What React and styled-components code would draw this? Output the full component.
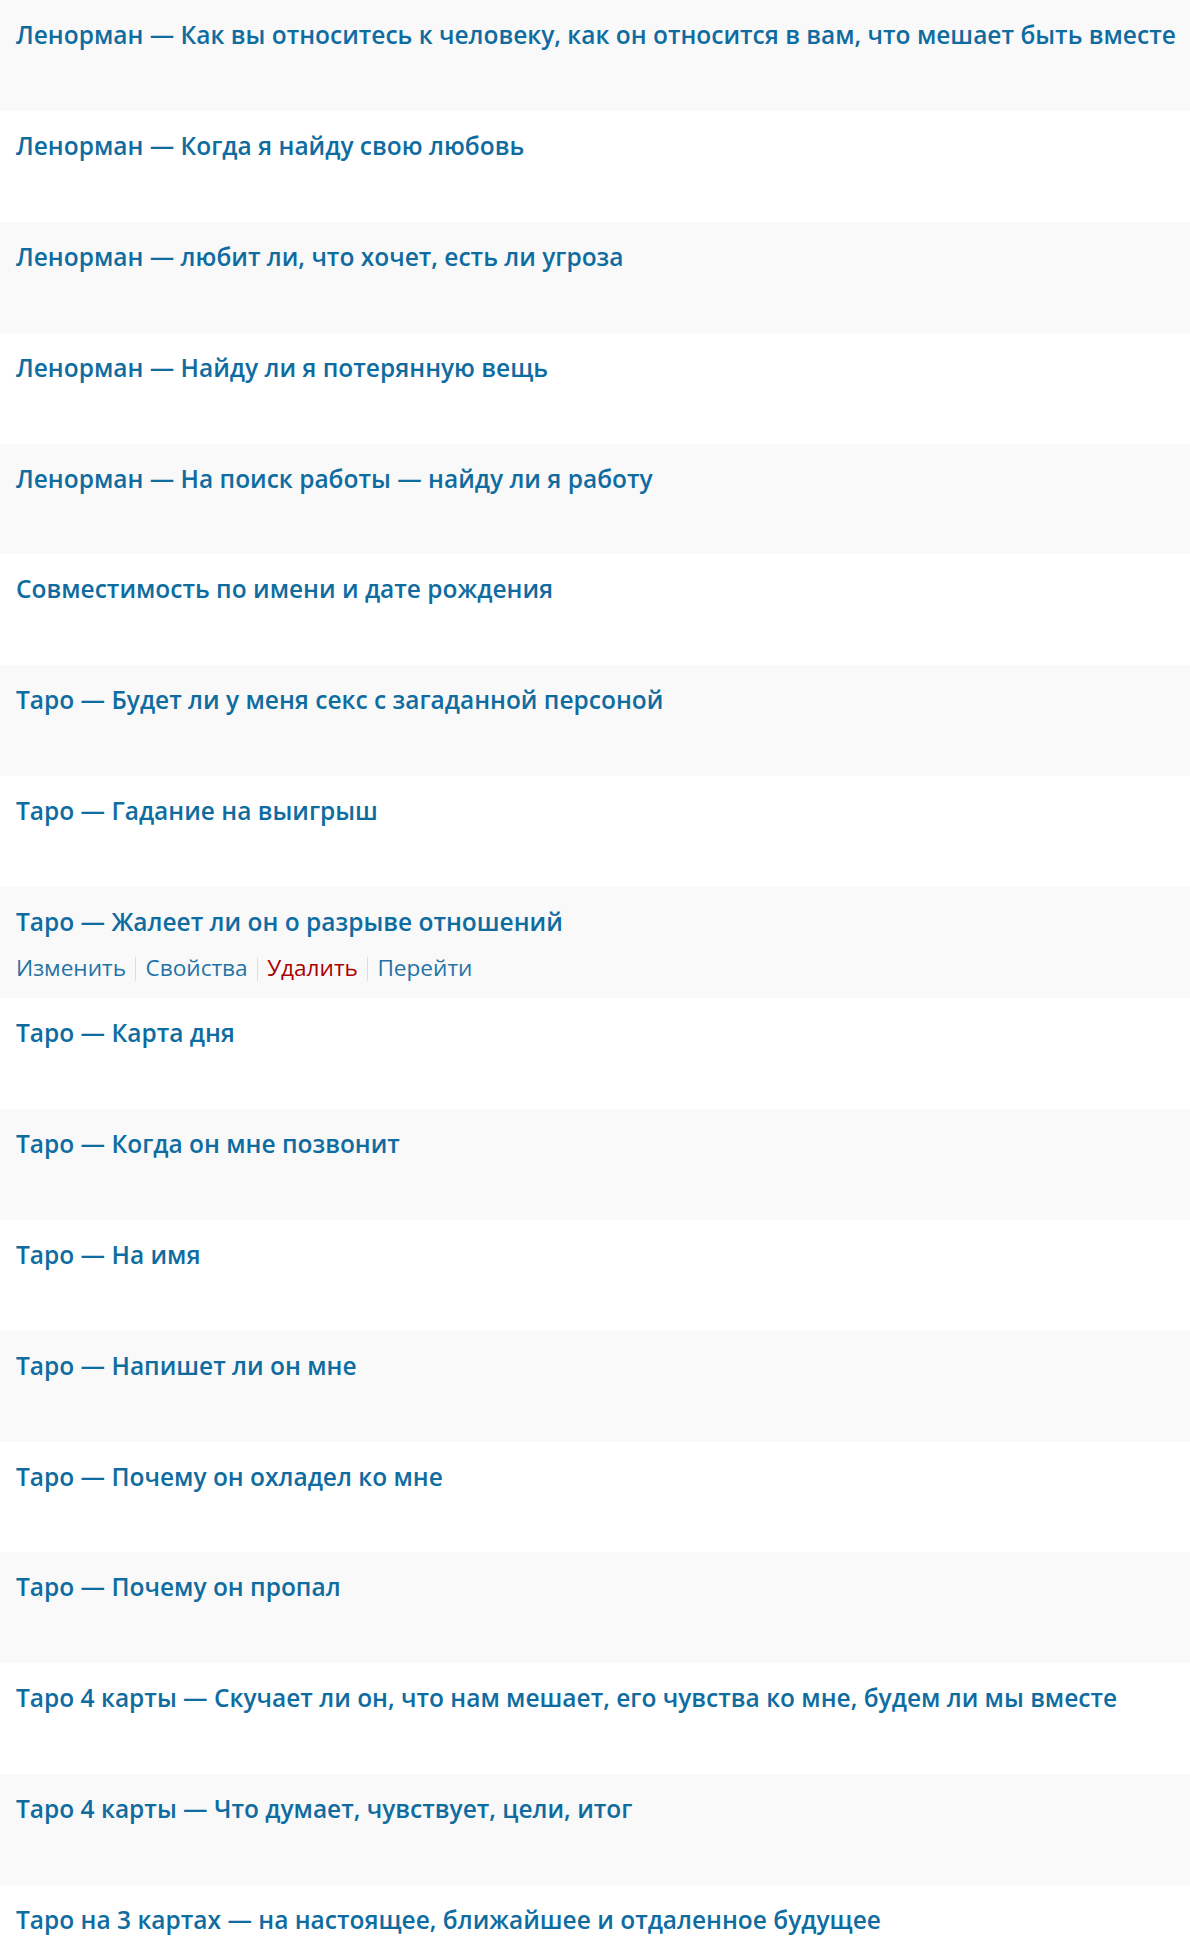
import React from "react";
import styled, { createGlobalStyle } from "styled-components";

const GlobalStyle = createGlobalStyle`
  body {
    margin: 0;
    background: #fff;
    font-family: "Open Sans", "Noto Sans", sans-serif;
  }
`;

const titles = [
  "Ленорман — Как вы относитесь к человеку, как он относится в вам, что мешает быть вместе",
  "Ленорман — Когда я найду свою любовь",
  "Ленорман — любит ли, что хочет, есть ли угроза",
  "Ленорман — Найду ли я потерянную вещь",
  "Ленорман — На поиск работы — найду ли я работу",
  "Совместимость по имени и дате рождения",
  "Таро — Будет ли у меня секс с загаданной персоной",
  "Таро — Гадание на выигрыш",
  "Таро — Жалеет ли он о разрыве отношений",
  "Таро — Карта дня",
  "Таро — Когда он мне позвонит",
  "Таро — На имя",
  "Таро — Напишет ли он мне",
  "Таро — Почему он охладел ко мне",
  "Таро — Почему он пропал",
  "Таро 4 карты — Скучает ли он, что нам мешает, его чувства ко мне, будем ли мы вместе",
  "Таро 4 карты — Что думает, чувствует, цели, итог",
  "Таро на 3 картах — на настоящее, ближайшее и отдаленное будущее",
];

const actions = [
  { label: "Изменить" },
  { label: "Свойства" },
  { label: "Удалить", danger: true },
  { label: "Перейти" },
];

const List = styled.div`
  display: flex;
  flex-direction: column;
`;

const Row = styled.div`
  height: 110.9px;
  box-sizing: border-box;
  padding: 15px 16px 0;
  background: ${(p) => (p.$alt ? "#f9f9f9" : "#fff")};
  overflow: hidden;
`;

const Title = styled.a`
  display: block;
  color: #0f6ca0;
  font-size: 24.5px;
  font-weight: 600;
  line-height: 40px;
  text-decoration: none;
  white-space: nowrap;
`;

const Actions = styled.div`
  display: flex;
  align-items: center;
  margin-top: 9px;
  font-size: 22.6px;
  line-height: 34px;
`;

const ActionLink = styled.a`
  color: ${(p) => (p.$danger ? "#a00" : "#1f73a6")};
  text-decoration: none;
`;

const Sep = styled.span`
  display: inline-block;
  width: 1.5px;
  height: 24px;
  margin: 2px 9px 0;
  background: #dedede;
`;

export default function App() {
  return (
    <>
      <GlobalStyle />
      <List>
        {titles.map((t, i) => (
          <Row key={i} $alt={i % 2 === 0}>
            <Title href="#">{t}</Title>
            {i === 8 && (
              <Actions>
                {actions.map((a, j) => (
                  <React.Fragment key={a.label}>
                    {j > 0 && <Sep />}
                    <ActionLink href="#" $danger={a.danger}>
                      {a.label}
                    </ActionLink>
                  </React.Fragment>
                ))}
              </Actions>
            )}
          </Row>
        ))}
      </List>
    </>
  );
}
